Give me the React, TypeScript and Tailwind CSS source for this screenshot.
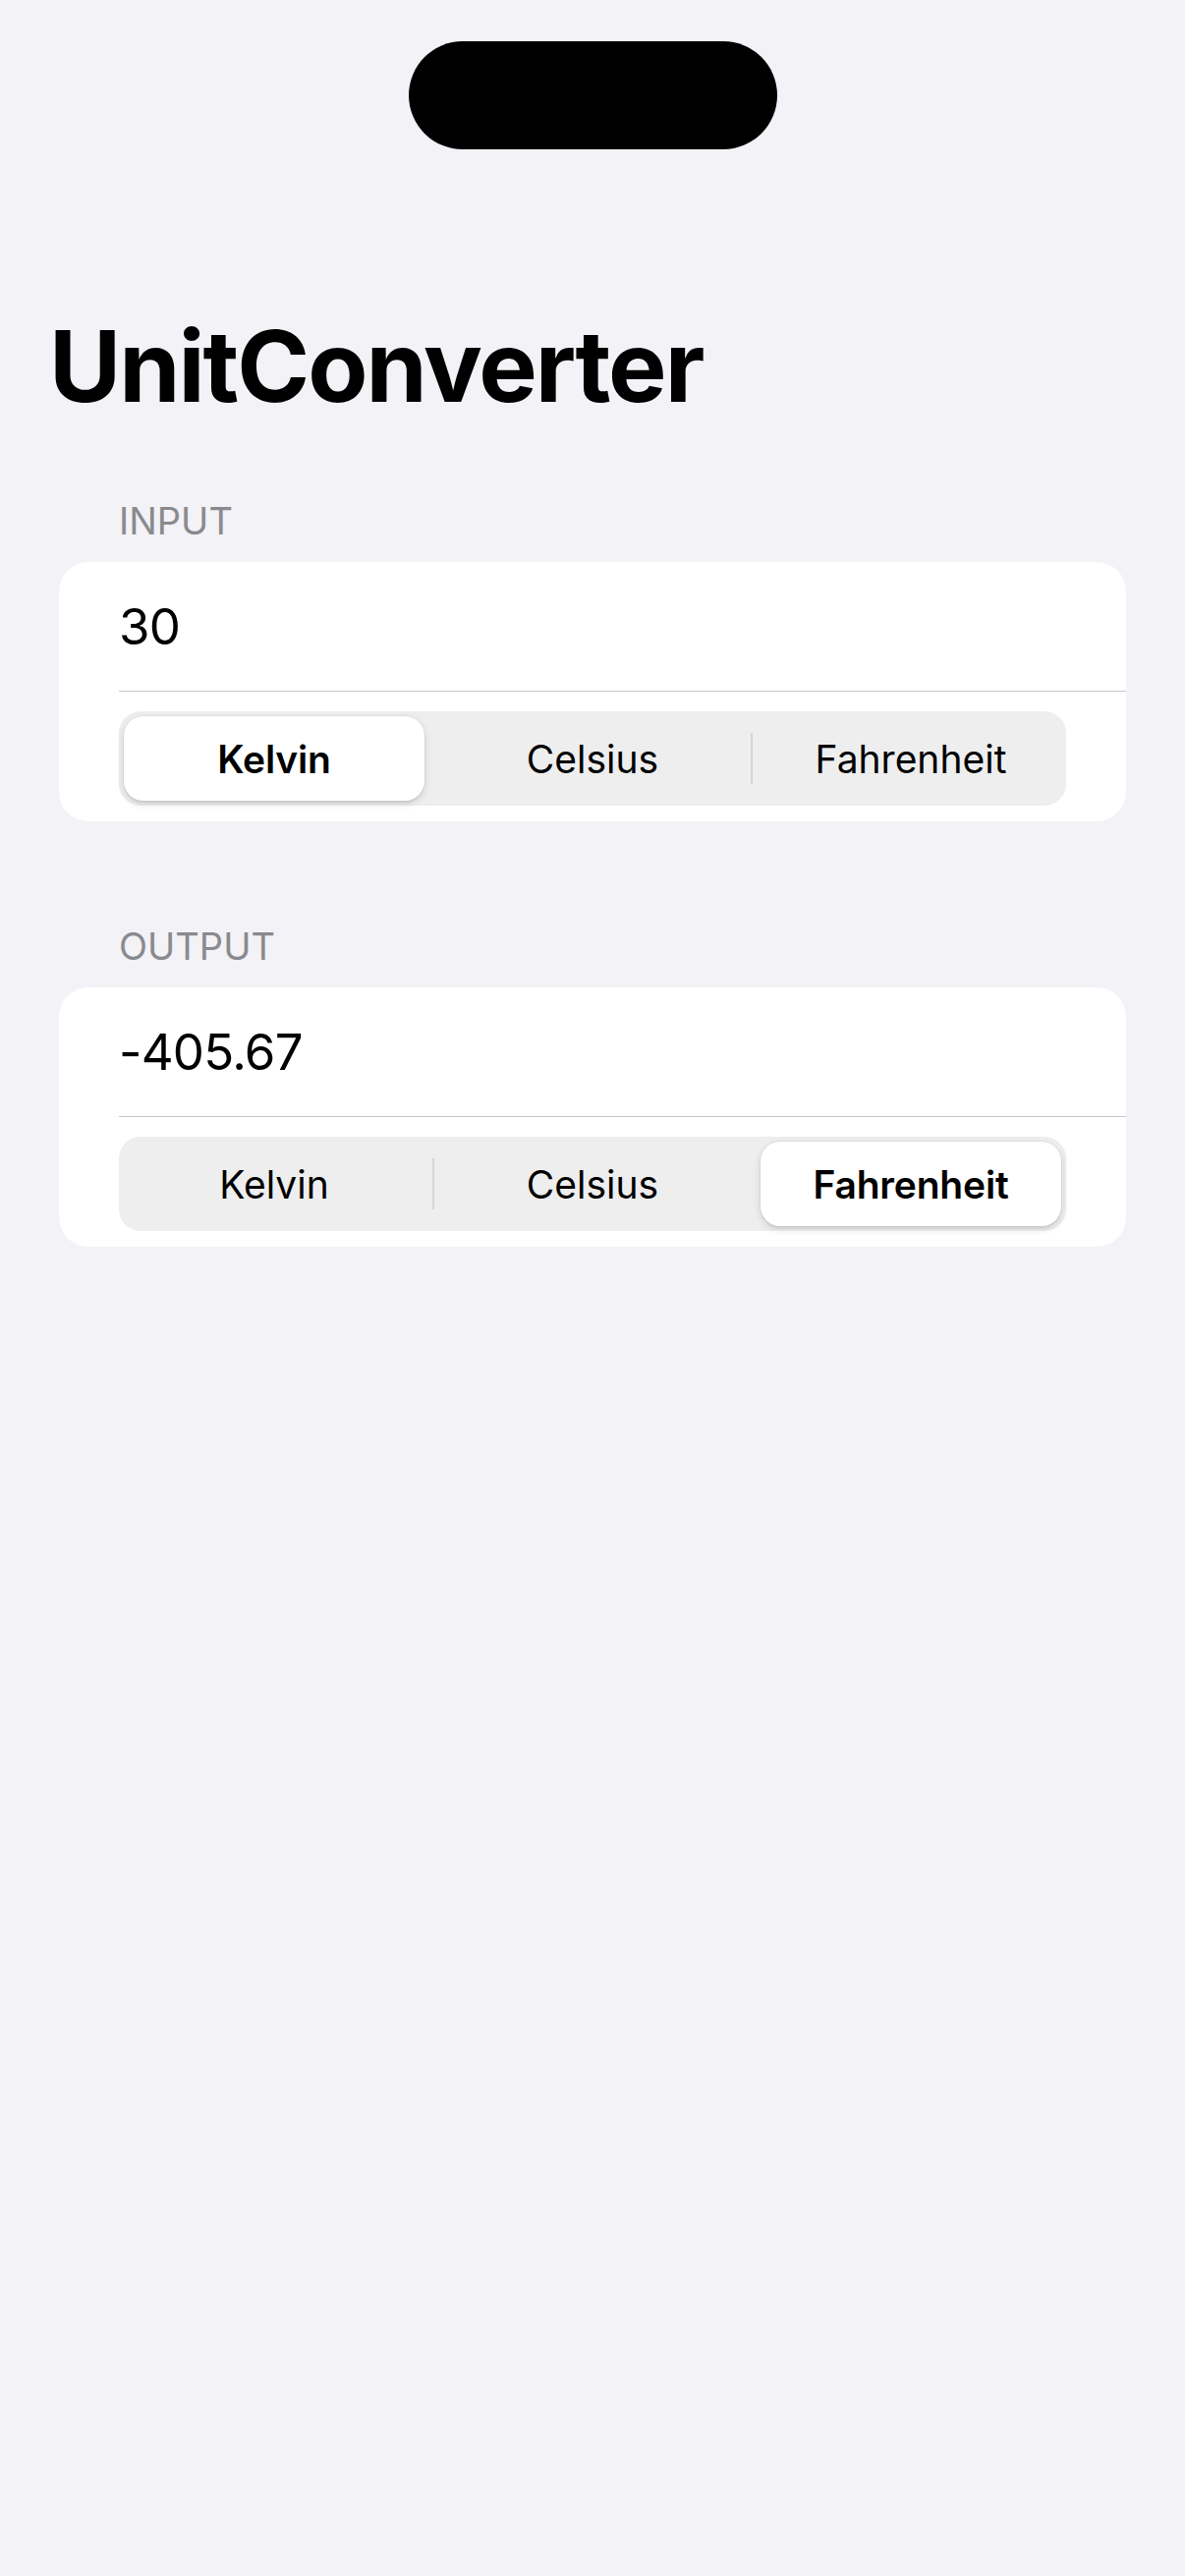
import type { ReactNode } from "react";

const UNITS = ["Kelvin", "Celsius", "Fahrenheit"];

function Segmented({ selected }: { selected: number }): ReactNode {
  const cells: ReactNode[] = [];
  UNITS.forEach((unit, i) => {
    if (i > 0) {
      const hidden = i === selected || i - 1 === selected;
      cells.push(
        <div key={`d${i}`} className="flex items-center justify-center">
          <div className={`h-[52px] w-[2px] ${hidden ? "bg-transparent" : "bg-[#d6d6d8]"}`} />
        </div>
      );
    }
    const active = i === selected;
    cells.push(
      <div
        key={unit}
        className={`flex items-center justify-center rounded-[20px] text-[39px] leading-none text-black ${
          active
            ? "bg-white font-semibold tracking-[-0.005em] shadow-[0_3px_8px_rgba(0,0,0,0.12),0_3px_1px_rgba(0,0,0,0.04),0_0_0_1px_rgba(0,0,0,0.04)]"
            : "font-normal"
        }`}
      >
        {unit}
      </div>
    );
  });

  return (
    <div className="grid h-[96px] grid-cols-[1fr_18px_1fr_18px_1fr] rounded-[22px] bg-[#eeeeef] p-[5px]">
      {cells}
    </div>
  );
}

function Section({
  label,
  value,
  selected,
  topGap,
}: {
  label: string;
  value: string;
  selected: number;
  topGap: string;
}): ReactNode {
  return (
    <section className={topGap}>
      <div className="pl-[121px] text-[38px] leading-none text-[#8a8a8e]">{label}</div>
      <div className="mx-[60px] mt-[23px] overflow-hidden rounded-[30px] bg-white">
        <div className="flex h-[131px] items-center pl-[61px] text-[51px] leading-none tracking-[-0.015em] text-black">
          {value}
        </div>
        <div className="ml-[61px] h-px bg-[#c6c6c8]" />
        <div className="px-[61px] pt-[20px] pb-[16px]">
          <Segmented selected={selected} />
        </div>
      </div>
    </section>
  );
}

export default function App(): ReactNode {
  return (
    <div className="min-h-[2622px] w-full bg-[#f2f2f7] font-['Inter',sans-serif] antialiased">
      <div className="flex justify-center pt-[42px]">
        <div className="h-[110px] w-[375px] rounded-full bg-black" />
      </div>

      <h1 className="mt-[171px] pl-[50px] text-[100px] leading-none font-bold tracking-[-0.02em] text-black">
        UnitConverter
      </h1>

      <Section label="INPUT" value="30" selected={0} topGap="mt-[88px]" />
      <Section label="OUTPUT" value="-405.67" selected={2} topGap="mt-[108px]" />
    </div>
  );
}
